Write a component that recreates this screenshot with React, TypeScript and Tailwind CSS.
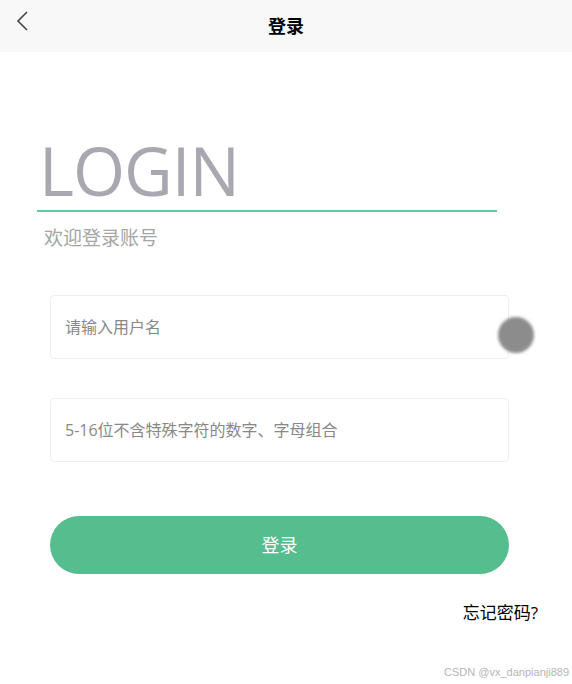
export default function App() {
  const font = { fontFamily: '"Open Sans", "Noto Sans CJK SC", sans-serif' };
  return (
    <div className="relative w-[572px] h-[684px] bg-white overflow-hidden" style={font}>
      <header className="relative h-[52px] bg-[#f8f8f8] flex items-center justify-center">
        <button className="absolute left-[14px] top-[10px] text-[#333]">
          <svg width="18" height="22" viewBox="0 0 18 22" fill="none">
            <path d="M13 2 L4 11 L13 20" stroke="#444" strokeWidth="1.6" strokeLinejoin="miter" />
          </svg>
        </button>
        <h1 className="text-[18px] font-bold text-black">登录</h1>
      </header>

      <div className="pt-[78px] px-[37px] w-[497px] box-content">
        <div className="pl-[2px] text-[67px] leading-[80px] tracking-[-1px] text-[#a9a8b1]">LOGIN</div>
        <div className="h-[2px] bg-[#66c9a0] w-[460px]" />
        <p className="pl-[7px] mt-[14px] text-[19px] leading-[24px] text-[#a5a5a5]">欢迎登录账号</p>
      </div>

      <div className="px-[50px] mt-[45px] w-[459px] box-content flex flex-col gap-[39px]">
        <div className="relative h-[64px] border border-[#efefef] rounded-[4px] flex items-center px-[14px]">
          <input
            className="w-full bg-transparent outline-none text-[16px] placeholder:text-[#888]"
            placeholder="请输入用户名"
          />
          <div className="absolute right-[-26px] top-[21px] w-[36px] h-[36px] rounded-full bg-[#8c8c8c] blur-[1.5px]" />
        </div>
        <div className="h-[64px] border border-[#efefef] rounded-[4px] flex items-center px-[14px]">
          <input
            className="w-full bg-transparent outline-none text-[16px] placeholder:text-[#888]"
            placeholder="5-16位不含特殊字符的数字、字母组合"
          />
        </div>
      </div>

      <div className="px-[50px] mt-[54px] w-[459px] box-content">
        <button className="w-full h-[58px] rounded-full bg-[#56bd8e] text-white text-[18px]">登录</button>
      </div>

      <div className="flex justify-end pr-[34px] mt-[26px]">
        <span className="text-[17px] text-black">忘记密码?</span>
      </div>

      <div className="absolute right-[3px] bottom-[4px] text-[11px] text-[#b5b5b5]" style={{ fontFamily: '"Liberation Sans", sans-serif' }}>
        CSDN @vx_danpianji889
      </div>
    </div>
  );
}
